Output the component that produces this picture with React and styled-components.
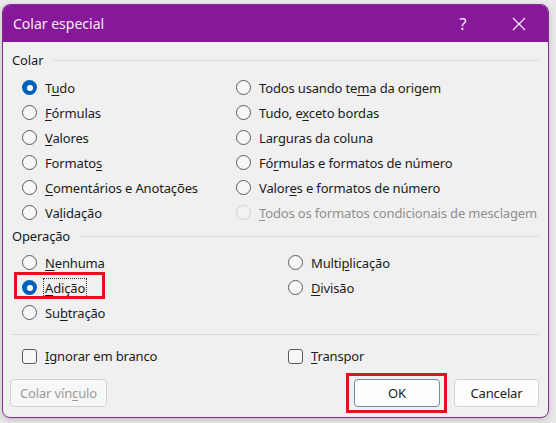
import styled, { createGlobalStyle } from "styled-components";

const GlobalStyle = createGlobalStyle`
  html, body {
    margin: 0;
    padding: 0;
    background: #e9e9e9;
  }
  body {
    font-family: "Noto Sans", "Open Sans", sans-serif;
    font-size: 13px;
    letter-spacing: -0.15px;
    color: #1b1b1b;
  }
`;

const Page = styled.div`
  width: 556px;
  height: 423px;
  padding: 4px 0 0 2px;
  box-sizing: border-box;
`;

const Dialog = styled.div`
  width: 547px;
  height: 414px;
  box-sizing: border-box;
  border: 1px solid #8a2a99;
  border-radius: 8px;
  background: #f0f0f0;
  overflow: hidden;
  display: flex;
  flex-direction: column;
  box-shadow: 0 2px 6px rgba(0, 0, 0, 0.18);
`;

const TitleBar = styled.div`
  height: 37px;
  flex: none;
  background: #87189a;
  color: #f7eaf8;
  display: flex;
  align-items: center;
  padding-left: 10px;
  font-size: 14px;
  letter-spacing: 0;
`;

const Title = styled.div`
  flex: 1;
`;

const TitleButton = styled.div`
  width: ${(p) => p.$w}px;
  display: flex;
  justify-content: center;
  align-items: center;
  font-size: 16px;
`;

const Body = styled.div`
  flex: 1;
  display: flex;
  flex-direction: column;
  padding: 8px 9px 0 9px;
`;

const GroupHeader = styled.div`
  height: 20px;
  display: flex;
  align-items: center;
  gap: 10px;
  margin-top: ${(p) => p.$top || 0}px;

  &::after {
    content: "";
    flex: 1;
    height: 1px;
    background: #d9d9d9;
  }
`;

const OptionGrid = styled.div`
  display: grid;
  grid-template-columns: ${(p) => p.$left}px 1fr;
  grid-auto-flow: column;
  grid-template-rows: repeat(${(p) => p.$rows}, 25px);
  padding-left: 10px;
  margin-top: ${(p) => p.$top}px;
`;

const Option = styled.label`
  display: flex;
  align-items: center;
  gap: 8px;
  white-space: nowrap;
  color: ${(p) => (p.$disabled ? "#8f8f8f" : "#1b1b1b")};
  height: 25px;
`;

const Radio = styled.span`
  width: 15px;
  height: 15px;
  box-sizing: border-box;
  border-radius: 50%;
  flex: none;
  border: ${(p) =>
    p.$checked ? "none" : p.$disabled ? "1px solid #d2d2d2" : "1px solid #5c5c5c"};
  background: ${(p) => (p.$checked ? "#005fb8" : p.$disabled ? "#f3f3f3" : "#f7f7f7")};
  display: flex;
  align-items: center;
  justify-content: center;

  &::after {
    content: "";
    display: ${(p) => (p.$checked ? "block" : "none")};
    width: 6px;
    height: 6px;
    border-radius: 50%;
    background: #fff;
  }
`;

const Key = styled.span`
  text-decoration: underline;
  text-underline-offset: 2px;
`;

/* red annotation frame drawn over an element */
const Marked = styled.div`
  position: relative;
  display: flex;
  align-items: center;

  &::before {
    content: "";
    position: absolute;
    left: ${(p) => p.$l}px;
    top: ${(p) => p.$t}px;
    width: ${(p) => p.$w}px;
    height: ${(p) => p.$h}px;
    box-sizing: border-box;
    border: 3px solid #e3101e;
    pointer-events: none;
  }
`;

const Focus = styled.span`
  outline: 1px dotted #333;
  outline-offset: 0;
  padding: 0 1px;
  margin-left: -1px;
`;

const Separator = styled.div`
  height: 1px;
  background: #d9d9d9;
  margin: 9px 0 0 0;
`;

const CheckRow = styled.div`
  display: grid;
  grid-template-columns: 266px 1fr;
  padding-left: 10px;
  margin-top: 10px;
  height: 22px;
`;

const CheckOption = styled.label`
  display: flex;
  align-items: center;
  gap: 8px;
`;

const Checkbox = styled.span`
  width: 15px;
  height: 15px;
  box-sizing: border-box;
  border: 1px solid #5c5c5c;
  border-radius: 3px;
  background: #f7f7f7;
  flex: none;
`;

const ButtonRow = styled.div`
  display: flex;
  align-items: center;
  margin-top: 12px;
  margin-left: -2px;
  gap: 14px;
`;

const Spacer = styled.div`
  flex: 1;
`;

const Button = styled.button`
  width: ${(p) => p.$w}px;
  height: 28px;
  box-sizing: border-box;
  border: 1px solid ${(p) => (p.$primary ? "#6f8ba5" : "#d3d3d3")};
  border-radius: 4px;
  background: ${(p) => (p.$disabled ? "#f7f7f7" : "#fdfdfd")};
  color: ${(p) => (p.$disabled ? "#9b9b9b" : "#1b1b1b")};
  font-family: inherit;
  font-size: 13px;
  letter-spacing: -0.15px;
  padding: 0;
`;

const CloseIcon = () => (
  <svg width="14" height="14" viewBox="0 0 14 14">
    <path d="M1 1 L13 13 M13 1 L1 13" stroke="#f7eaf8" strokeWidth="1.2" fill="none" />
  </svg>
);

const R = ({ children, checked, disabled }) => (
  <Option $disabled={disabled}>
    <Radio $checked={checked} $disabled={disabled} />
    <span>{children}</span>
  </Option>
);

export default function App() {
  return (
    <>
      <GlobalStyle />
      <Page>
        <Dialog>
          <TitleBar>
            <Title>Colar especial</Title>
            <TitleButton $w={54}>?</TitleButton>
            <TitleButton $w={58}>
              <CloseIcon />
            </TitleButton>
          </TitleBar>
          <Body>
            <GroupHeader>Colar</GroupHeader>
            <OptionGrid $left={214} $rows={6} $top={5}>
              <R checked>
                T<Key>u</Key>do
              </R>
              <R>
                <Key>F</Key>órmulas
              </R>
              <R>
                <Key>V</Key>alores
              </R>
              <R>
                Formato<Key>s</Key>
              </R>
              <R>
                <Key>C</Key>omentários e Anotações
              </R>
              <R>
                Va<Key>l</Key>idação
              </R>
              <R>
                Todos usando te<Key>m</Key>a da origem
              </R>
              <R>
                Tudo, e<Key>x</Key>ceto bordas
              </R>
              <R>
                Lar<Key>g</Key>uras da coluna
              </R>
              <R>
                Fó<Key>r</Key>mulas e formatos de número
              </R>
              <R>
                Valor<Key>e</Key>s e formatos de número
              </R>
              <R disabled>
                <Key>T</Key>odos os formatos condicionais de mesclagem
              </R>
            </OptionGrid>

            <GroupHeader $top={1}>Operação</GroupHeader>
            <OptionGrid $left={266} $rows={3} $top={4}>
              <R>
                <Key>N</Key>enhuma
              </R>
              <Marked $l={-8} $t={-3} $w={91} $h={27}>
                <Option>
                  <Radio $checked />
                  <Focus>
                    <Key>A</Key>dição
                  </Focus>
                </Option>
              </Marked>
              <R>
                Su<Key>b</Key>tração
              </R>
              <R>
                Multi<Key>p</Key>licação
              </R>
              <R>
                <Key>D</Key>ivisão
              </R>
            </OptionGrid>

            <Separator />

            <CheckRow>
              <CheckOption>
                <Checkbox />
                <span>
                  <Key>I</Key>gnorar em branco
                </span>
              </CheckOption>
              <CheckOption>
                <Checkbox />
                <span>
                  <Key>T</Key>ranspor
                </span>
              </CheckOption>
            </CheckRow>

            <ButtonRow>
              <Button $w={97} $disabled>
                Colar vín<Key>c</Key>ulo
              </Button>
              <Spacer />
              <Marked $l={-8} $t={-6} $w={101} $h={40}>
                <Button $w={86} $primary>
                  OK
                </Button>
              </Marked>
              <Button $w={85}>Cancelar</Button>
            </ButtonRow>
          </Body>
        </Dialog>
      </Page>
    </>
  );
}
